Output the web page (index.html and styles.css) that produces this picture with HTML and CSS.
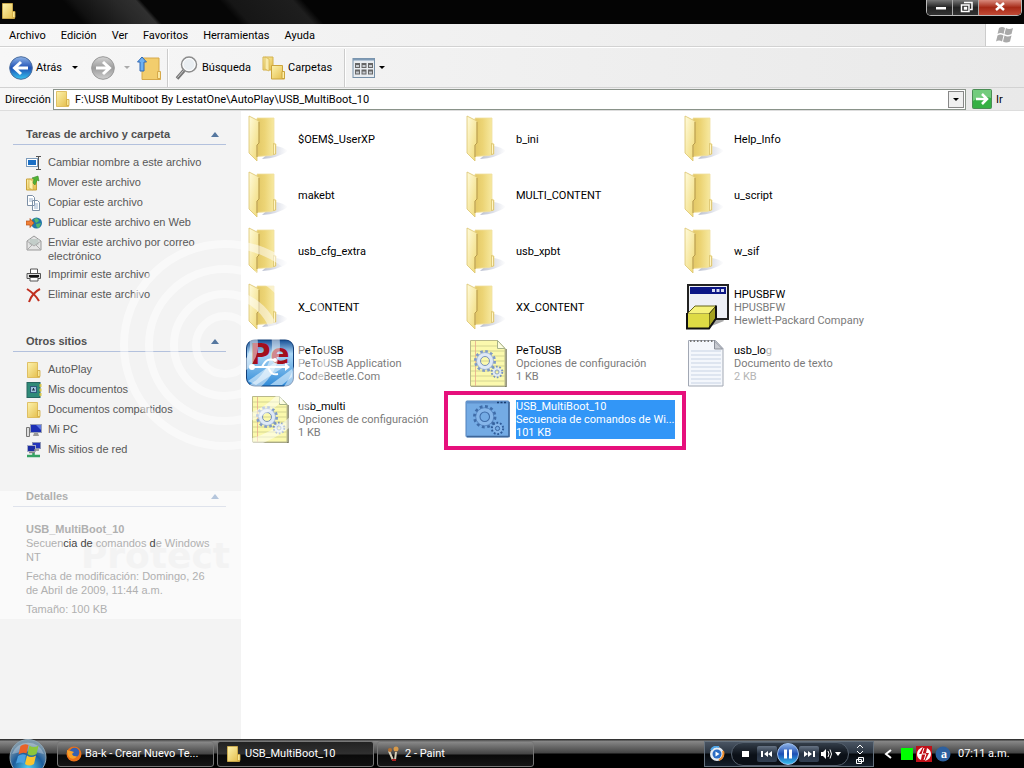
FILE: index.html
```html
<!DOCTYPE html>
<html lang="es">
<head>
    <meta charset="UTF-8">
    <meta name="viewport" content="width=device-width, initial-scale=1.0">
    <title>USB_MultiBoot_10</title>
    <link rel="stylesheet" href="styles.css">
</head>
<body>
    <!-- shared icons -->
    <svg class="sprite" aria-hidden="true">
        <defs>
            <linearGradient id="gFolder" x1="0" y1="0" x2="1" y2="1"><stop offset="0" stop-color="#fdf3ae"/><stop offset="1" stop-color="#e3bb46"/></linearGradient>
            <linearGradient id="gBack" x1="0" y1="0" x2="1" y2="0"><stop offset="0" stop-color="#e3c866"/><stop offset="0.4" stop-color="#ecd475"/><stop offset="1" stop-color="#f9eda9"/></linearGradient>
            <linearGradient id="gFlap" x1="0" y1="0" x2="1" y2="1"><stop offset="0" stop-color="#fffbdc"/><stop offset="1" stop-color="#f0d973"/></linearGradient>
            <linearGradient id="gShade" x1="0" y1="0" x2="1" y2="0"><stop offset="0" stop-color="#a9b0c6"/><stop offset="1" stop-color="#fff"/></linearGradient>
            <linearGradient id="gBlue" x1="0" y1="0" x2="0" y2="1"><stop offset="0" stop-color="#8fb4e8"/><stop offset="0.5" stop-color="#1d4fb4"/><stop offset="1" stop-color="#37c4f0"/></linearGradient>
            <linearGradient id="gGray" x1="0" y1="0" x2="0" y2="1"><stop offset="0" stop-color="#d4d4d4"/><stop offset="0.5" stop-color="#9c9c9c"/><stop offset="1" stop-color="#cfcfcf"/></linearGradient>
            <linearGradient id="gPe" x1="0" y1="0" x2="0" y2="1"><stop offset="0" stop-color="#164f96"/><stop offset="0.3" stop-color="#a9d6f5"/><stop offset="1" stop-color="#2f8ad8"/></linearGradient>
            <radialGradient id="gOrb" cx="0.5" cy="0.8" r="0.7"><stop offset="0" stop-color="#4fd0f5"/><stop offset="0.6" stop-color="#1d5c9a"/><stop offset="1" stop-color="#7d98ab"/></radialGradient>
        </defs>
        <symbol id="folder-big" viewBox="0 0 48 48">
            <path d="M16 44q16-1 26-8-5-4-12-5z" fill="url(#gShade)" opacity="0.8"/>
            <path d="M11 3h17v25l2 1v10l-5 1.500-14 1z" fill="url(#gBack)" stroke="#f0e0a0" stroke-width="0.800"/>
            <path d="M27.500 28.500l2 1v9.500l-2 .5z" fill="#fff6c8" stroke="#cfb04d" stroke-width="0.600"/>
            <path d="M3 1l10 5v22l-2 2v16l-8-8z" fill="url(#gFlap)" stroke="#dcc46e" stroke-width="0.800"/>
            <path d="M13 7v21l-2 2v12" fill="none" stroke="#b89c4c" stroke-width="1"/>
        </symbol>
        <symbol id="folder" viewBox="0 0 16 16">
            <path d="M1.500.5h10v8l2 1v6h-12z" fill="url(#gFolder)" stroke="#d9b44b" stroke-width="0.800"/>
            <path d="M11.500 8.500h2.500v6h-2.500z" fill="#f9e794" stroke="#cfa73e" stroke-width="0.800"/>
        </symbol>
        <symbol id="gears" viewBox="0 0 32 32">
            <circle cx="12" cy="12" r="9.500" fill="none" stroke="#7f9ac6" stroke-width="3" stroke-dasharray="2.600 2.370"/>
            <circle cx="12" cy="12" r="6.500" fill="none" stroke="#dfe9f6" stroke-width="4"/>
            <circle cx="12" cy="12" r="8.500" fill="none" stroke="#8aa5cf" stroke-width="0.700"/>
            <circle cx="12" cy="12" r="4.500" fill="none" stroke="#7892bd" stroke-width="1"/>
            <circle cx="24" cy="23" r="5" fill="none" stroke="#7892bd" stroke-width="2.500" stroke-dasharray="1.600 1.540"/>
            <circle cx="24" cy="23" r="3.200" fill="none" stroke="#dfe9f6" stroke-width="2.500"/>
            <circle cx="24" cy="23" r="2" fill="none" stroke="#7892bd" stroke-width="0.800"/>
        </symbol>
        <symbol id="gears-dark" viewBox="0 0 32 32">
            <circle cx="12" cy="12" r="9.500" fill="none" stroke="#3f6ca8" stroke-width="3" stroke-dasharray="2.600 2.370"/>
            <circle cx="12" cy="12" r="6.500" fill="none" stroke="#86b6ea" stroke-width="4"/>
            <circle cx="12" cy="12" r="8.500" fill="none" stroke="#4c7ab6" stroke-width="0.700"/>
            <circle cx="12" cy="12" r="4.500" fill="none" stroke="#3f6ca8" stroke-width="1"/>
            <circle cx="24" cy="23" r="5" fill="none" stroke="#2f5b98" stroke-width="2.500" stroke-dasharray="1.600 1.540"/>
            <circle cx="24" cy="23" r="3.200" fill="none" stroke="#86b6ea" stroke-width="2.500"/>
            <circle cx="24" cy="23" r="2" fill="none" stroke="#2f5b98" stroke-width="0.800"/>
        </symbol>
        <symbol id="config" viewBox="0 0 48 48">
            <path d="M7 48h35V10" fill="none" stroke="#77775c" stroke-width="1.500"/>
            <path d="M6.500 1.500h27l7.500 8v37.500h-34.500z" fill="#fbf9ad" stroke="#b9b98a"/>
            <path d="M7 7h26M7 12h34M7 17h34M7 22h34M7 27h34M7 32h34M7 37h34M7 42h34" stroke="#cfd08e" stroke-width="0.900"/>
            <path d="M11.500 2v45" stroke="#e8a98c" stroke-width="0.800"/>
            <path d="M33.500 1.500v8h7.500z" fill="#fdfde0" stroke="#a7b389"/>
            <use href="#gears" x="9" y="10" width="32" height="32"/>
        </symbol>
        <symbol id="batch" viewBox="0 0 48 48">
            <rect x="2" y="6" width="43" height="36" rx="1" fill="#74abe4" stroke="#4f80bb"/>
            <path d="M3 41.500h42V7" fill="none" stroke="#3d6699" stroke-width="1.500"/>
            <path d="M3 7.500h41" stroke="#5e90cb" stroke-width="2"/>
            <path d="M33 7.500h10" stroke="#173c70" stroke-width="1.500" stroke-dasharray="2 1.500"/>
            <use href="#gears-dark" x="8" y="9" width="34" height="34"/>
        </symbol>
        <symbol id="textfile" viewBox="0 0 48 48">
            <path d="M6.500 1.500h27l7.500 8v37.500h-34.500z" fill="#f4f7fc" stroke="#a2a8b4"/>
            <path d="M9 12h30M9 16h30M9 20h30M9 24h30M9 28h30M9 32h30M9 36h30M9 40h30M9 44h30" stroke="#c3cee2" stroke-width="0.900"/>
            <path d="M8 2h25" stroke="#777" stroke-width="2" stroke-dasharray="1.500 2"/>
            <path d="M32.500 2v8h8z" fill="#c8cbd2" stroke="#8a8f99"/>
        </symbol>
        <symbol id="hp" viewBox="0 0 48 48">
            <path d="M27 44l15-6-4-6z" fill="#aaa"/>
            <rect x="6" y="2" width="40" height="34" fill="#eef0f6" stroke="#222" stroke-width="2"/>
            <rect x="8" y="4" width="36" height="7" fill="#0c1786"/>
            <path d="M30 7.500h12" stroke="#d8dcf2" stroke-width="3" stroke-dasharray="3 1.500"/>
            <path d="M5 31l8-8h21l-7 8z" fill="#f5f27c" stroke="#66641a"/>
            <path d="M27 31l7-8v12l-7 10z" fill="#a5a321" stroke="#444310"/>
            <path d="M5 31h22v14h-22z" fill="#dedb45"/>
            <path d="M5 30v15.500h22l7-10v-13" fill="none" stroke="#111" stroke-width="2"/>
        </symbol>
        <symbol id="petousb" viewBox="0 0 48 48">
            <rect x="0.500" y="1" width="47" height="46" rx="8" fill="url(#gPe)" stroke="#123e77"/>
            <path d="M2 42L28 24h16L10 46zM24 46l22-16v8l-10 8z" fill="#e6f5ff" opacity="0.600"/>
            <text x="4" y="25" class="pe-text">Pe</text>
            <path d="M5 28h35M16 28c4-8 7-8 12-7M22 28c3 7 5 8 10 7" fill="none" stroke="#fff" stroke-width="2"/>
            <circle cx="6" cy="28" r="3" fill="#fff"/><circle cx="29" cy="21" r="2" fill="#fff"/><path d="M39 24l5 4-5 4z" fill="#fff"/>
        </symbol>
        <symbol id="flag" viewBox="0 0 20 20">
            <path d="M4 3q3-2 6 0l-1.500 6q-3-2-6 0z"/><path d="M11 3q3 2 7 0l-1.500 6q-4 2-7 0z"/>
            <path d="M2.500 10.500q3-2 6 0l-1.500 6q-3-2-6 0z"/><path d="M9.500 10.500q3 2 7 0l-1.500 6q-4 2-7 0z"/>
        </symbol>
        <symbol id="collapse" viewBox="0 0 8 5"><path d="M0 5l4-5 4 5z"/></symbol>
        <symbol id="down" viewBox="0 0 6 3"><path d="M0 0h6l-3 3z"/></symbol>
    </svg>

    <header class="title-bar">
        <svg class="icon16"><use href="#folder"/></svg>
        <div class="window-buttons">
            <button class="win-btn" aria-label="Minimizar"><svg viewBox="0 0 24 14"><path d="M8 6h10v2.500h-10z" fill="#fff"/></svg></button>
            <button class="win-btn" aria-label="Restaurar"><svg viewBox="0 0 24 14"><path d="M10 1.500h8v7h-2M7.500 4h7.500v6.500h-7.500z M10.500 6.500h2v1.500h-2z" fill="none" stroke="#fff" stroke-width="1.500"/></svg></button>
            <button class="win-btn win-close" aria-label="Cerrar"><svg viewBox="0 0 24 14"><path d="M8 2l8 7M16 2l-8 7" stroke="#fff" stroke-width="2.500"/></svg></button>
        </div>
    </header>

    <nav class="menu-bar">
        <button>Archivo</button>
        <button>Edición</button>
        <button>Ver</button>
        <button>Favoritos</button>
        <button>Herramientas</button>
        <button>Ayuda</button>
        <div class="brand"><svg class="brand-flag"><use href="#flag"/></svg></div>
    </nav>

    <div class="toolbar">
        <button class="tool back">
            <svg class="icon24" viewBox="0 0 24 24"><circle cx="12" cy="12" r="11.300" fill="url(#gBlue)" stroke="#4a6c9c"/><path d="M12 6l-6.500 6 6.500 6M6 12h13" fill="none" stroke="#fff" stroke-width="3"/></svg>
            Atrás
            <svg class="arrow"><use href="#down"/></svg>
        </button>
        <button class="tool forward" aria-label="Adelante">
            <svg class="icon24" viewBox="0 0 24 24"><circle cx="12" cy="12" r="11.300" fill="url(#gGray)" stroke="#999"/><path d="M12 6l6.500 6-6.500 6M18 12h-13" fill="none" stroke="#fff" stroke-width="3"/></svg>
            <svg class="arrow"><use href="#down"/></svg>
        </button>
        <button class="tool" aria-label="Arriba">
            <svg class="icon24" viewBox="0 0 24 24"><path d="M5 2h17v14l1.500 1v6.500h-18.500z" fill="#f2cd6d" stroke="#d6a94a"/><path d="M20.500 15.500h3v7h-3z" fill="#fbe9a4" stroke="#d6a94a"/><path d="M5 1l4.500 5h-2.500v9h-4v-9h-2.500z" fill="#6db1f2" stroke="#3168b5"/></svg>
        </button>
        <span class="divider"></span>
        <button class="tool search">
            <svg class="icon24" viewBox="0 0 24 24"><circle cx="14" cy="8.500" r="7.500" fill="#e9eef2" stroke="#8c8c8c" stroke-width="1.500"/><circle cx="14" cy="8.500" r="6" fill="none" stroke="#fff"/><path d="M9 14.500l-7 8" stroke="#777" stroke-width="3.500"/><path d="M8.500 14.500l-6 7" stroke="#ccc"/></svg>
            Búsqueda
        </button>
        <button class="tool folders">
            <svg class="icon24" viewBox="0 0 24 24"><path d="M2 1h10v13h-10z" fill="url(#gFolder)" stroke="#d4b24e"/><path d="M4 1l4 2v12l-4-2z" fill="#f9ebaa" stroke="#d4b24e" stroke-width="0.700"/><path d="M10.500 9.500h11v6l2 1v6.500h-13z" fill="url(#gFolder)" stroke="#cba43d"/><path d="M21 15.500h2.500v7h-2.500z" fill="#fff0a5" stroke="#cba43d"/></svg>
            Carpetas
        </button>
        <span class="divider"></span>
        <button class="tool views" aria-label="Vistas">
            <svg class="icon24" viewBox="0 0 24 24"><rect x="1" y="2.500" width="21.500" height="19" fill="#e9edf1" stroke="#7690a8"/><path d="M1 3.500h21.500" stroke="#7f9bb6" stroke-width="2"/><path d="M3 9.500h5M9.500 9.500h5M16 9.500h5M3 16h5M9.500 16h5M16 16h5" stroke="#666" stroke-width="5"/><path d="M4 10h3M10.500 10h3M17 10h3M4 16.500h3M10.500 16.500h3M17 16.500h3" stroke="#c5cad0" stroke-width="2"/></svg>
            <svg class="arrow"><use href="#down"/></svg>
        </button>
    </div>

    <form class="address-bar" onsubmit="return false">
        <label for="address">Dirección</label>
        <div class="address-box">
            <svg class="icon16"><use href="#folder"/></svg>
            <input type="text" id="address" value="F:\USB Multiboot By LestatOne\AutoPlay\USB_MultiBoot_10">
            <button type="button" class="drop" aria-label="Desplegar"><svg class="arrow"><use href="#down"/></svg></button>
        </div>
        <button class="go">
            <svg viewBox="0 0 20 20"><rect x="0.500" y="0.500" width="19" height="19" rx="1" fill="#35b044" stroke="#4b8d55"/><path d="M1 1h18v8q-9-3-18 3z" fill="#8fd896" opacity="0.700"/><path d="M10 5l5 5-5 5M4 10h10" fill="none" stroke="#fff" stroke-width="2.500"/></svg>
            Ir
        </button>
    </form>

    <div class="explorer">
        <aside class="side-panel">
            <section class="task-group">
                <h2>Tareas de archivo y carpeta <svg class="collapse"><use href="#collapse"/></svg></h2>
                <ul>
                    <li><a href="#"><svg class="icon16" viewBox="0 0 16 16"><rect x="0.500" y="3.500" width="11" height="8" fill="#fff" stroke="#7d9cbc"/><rect x="2" y="5" width="8" height="5" fill="#1b6fc4"/><path d="M10 1.500h5M12.500 1.500v13M10 14.500h5" stroke="#555" fill="none"/></svg><span>Cambiar nombre a este archivo</span></a></li>
                    <li><a href="#"><svg class="icon16" viewBox="0 0 16 16"><path d="M.5 4h10v11h-10z" fill="url(#gFolder)" stroke="#c9a23b"/><path d="M3 4l4 2v9l-4-2z" fill="#fff3ad" stroke="#c9a23b" stroke-width="0.600"/><path d="M7 8l1-4-2-1 6-2 1 5-2-1-2 5z" fill="#4fb335" stroke="#3a8a26" stroke-width="0.600"/></svg><span>Mover este archivo</span></a></li>
                    <li><a href="#"><svg class="icon16" viewBox="0 0 16 16"><path d="M1.500.5h5l2 2v8h-7zM6.500 5.500h5l2 2v8h-7z" fill="#fff" stroke="#7c8fa5"/><path d="M3 4h4M3 6h3M8 9h4M8 11h4M8 13h4" stroke="#9ab0ca"/></svg><span>Copiar este archivo</span></a></li>
                    <li><a href="#"><svg class="icon16" viewBox="0 0 16 16"><circle cx="10.500" cy="8" r="5.500" fill="#2176a8"/><path d="M8 4q4-2 5 2l-3 2zM10 9l5-1-2 5q-3 0-3-4z" fill="#55b86b"/><path d="M0 6h4V3.500l4 4.500-4 4.500V10H0z" fill="#f08035" stroke="#b6501a" stroke-width="0.700"/></svg><span>Publicar este archivo en Web</span></a></li>
                    <li><a href="#"><svg class="icon16" viewBox="0 0 16 16"><path d="M1 6l7-5 7 5v9h-14z" fill="#e4e4e4" stroke="#999"/><path d="M3.500 4h9v6h-9z" fill="#c3cdc9"/><path d="M1 6l7 5 7-5M1 15l5-5M15 15l-5-5" fill="none" stroke="#aaa"/></svg><span>Enviar este archivo por correo electrónico</span></a></li>
                    <li><a href="#"><svg class="icon16" viewBox="0 0 16 16"><path d="M4.500 6v-4h7v4" fill="#fff" stroke="#555"/><path d="M1 6.500h13.500v5h-13.500z" fill="#ddd" stroke="#555"/><path d="M3 9h10" stroke="#111" stroke-width="2"/><path d="M4 10.500h8v3.500h-8z" fill="#fff" stroke="#555"/></svg><span>Imprimir este archivo</span></a></li>
                    <li><a href="#"><svg class="icon16" viewBox="0 0 16 16"><path d="M1 2q8 5 12 12M14 2q-8 4-11 13" fill="none" stroke="#c02f1f" stroke-width="2"/></svg><span>Eliminar este archivo</span></a></li>
                </ul>
            </section>
            <section class="task-group">
                <h2>Otros sitios <svg class="collapse"><use href="#collapse"/></svg></h2>
                <ul>
                    <li><a href="#"><svg class="icon16"><use href="#folder"/></svg><span>AutoPlay</span></a></li>
                    <li><a href="#"><svg class="icon16" viewBox="0 0 16 16"><rect x="1" y="0.500" width="13" height="15" fill="#2f8a78" stroke="#28665f"/><rect x="4.500" y="4.500" width="6" height="6" fill="#9dc1dc" stroke="#30597c"/><path d="M6 8h3M7.500 6v2" stroke="#234"/><path d="M14.500 2v12" stroke="#d7c54b" stroke-width="2" stroke-dasharray="3 1.500"/></svg><span>Mis documentos</span></a></li>
                    <li><a href="#"><svg class="icon16"><use href="#folder"/></svg><span>Documentos compartidos</span></a></li>
                    <li><a href="#"><svg class="icon16" viewBox="0 0 16 16"><path d="M0.500 5.500h3v9h-3z" fill="#ddd" stroke="#777"/><rect x="4.500" y="2.500" width="11" height="8" fill="#1c2fb4" stroke="#9aa0b4"/><path d="M10 3l5 0v5z" fill="#5c77e4"/><path d="M8 11h4l1 3h-6z" fill="#999"/></svg><span>Mi PC</span></a></li>
                    <li><a href="#"><svg class="icon16" viewBox="0 0 16 16"><rect x="6.500" y="0.500" width="8" height="6" fill="#2436bb" stroke="#8b93b5"/><rect x="1.500" y="3.500" width="8" height="6" fill="#1b2ba2" stroke="#a7adc6"/><path d="M3 10.500h6M8 8h5" stroke="#888" stroke-width="1.500"/><path d="M7.500 11v3M1 14h13" stroke="#35a163" stroke-width="2.500"/></svg><span>Mis sitios de red</span></a></li>
                </ul>
            </section>
            <section class="task-group details">
                <h2>Detalles <svg class="collapse"><use href="#collapse"/></svg></h2>
                <div class="details-body">
                    <span class="protect">Protect</span>
                    <strong>USB_MultiBoot_10</strong>
                    <p>Secuen<b>cia de</b> comandos <b>d</b>e Windows NT</p>
                    <p>Fecha de modificación: Domingo, 26 de Abril de 2009, 11:44 a.m.</p>
                    <p>Tamaño: 100 KB</p>
                </div>
            </section>
        </aside>

        <main class="files">
            <a href="#" class="file"><svg><use href="#folder-big"/></svg><span class="label">$OEM$_UserXP</span></a>
            <a href="#" class="file"><svg><use href="#folder-big"/></svg><span class="label">b_ini</span></a>
            <a href="#" class="file"><svg><use href="#folder-big"/></svg><span class="label">Help_Info</span></a>
            <a href="#" class="file"><svg><use href="#folder-big"/></svg><span class="label">makebt</span></a>
            <a href="#" class="file"><svg><use href="#folder-big"/></svg><span class="label">MULTI_CONTENT</span></a>
            <a href="#" class="file"><svg><use href="#folder-big"/></svg><span class="label">u_script</span></a>
            <a href="#" class="file"><svg><use href="#folder-big"/></svg><span class="label">usb_cfg_extra</span></a>
            <a href="#" class="file"><svg><use href="#folder-big"/></svg><span class="label">usb_xpbt</span></a>
            <a href="#" class="file"><svg><use href="#folder-big"/></svg><span class="label">w_sif</span></a>
            <a href="#" class="file"><svg><use href="#folder-big"/></svg><span class="label">X_CONTENT</span></a>
            <a href="#" class="file"><svg><use href="#folder-big"/></svg><span class="label">XX_CONTENT</span></a>
            <a href="#" class="file"><svg><use href="#hp"/></svg><span class="label">HPUSBFW<small>HPUSBFW</small><small>Hewlett-Packard Company</small></span></a>
            <a href="#" class="file"><svg><use href="#petousb"/></svg><span class="label">PeToUSB<small>PeToUSB Application</small><small>CodeBeetle.Com</small></span></a>
            <a href="#" class="file"><svg><use href="#config"/></svg><span class="label">PeToUSB<small>Opciones de configuración</small><small>1 KB</small></span></a>
            <a href="#" class="file"><svg><use href="#textfile"/></svg><span class="label">usb_lo<i>g</i><small>Documento de texto</small><small><i>2 KB</i></small></span></a>
            <a href="#" class="file"><svg><use href="#config"/></svg><span class="label">usb_multi<small>Opciones de configuración</small><small>1 KB</small></span></a>
            <a href="#" class="file selected"><svg><use href="#batch"/></svg><span class="label">USB_MultiBoot_10<small>Secuencia de comandos de Wi...</small><small>101 KB</small></span></a>
        </main>

        <svg class="rings" viewBox="0 0 220 220" aria-hidden="true">
            <circle cx="110" cy="110" r="101"/>
            <circle cx="110" cy="110" r="76"/>
            <circle cx="110" cy="110" r="51"/>
            <circle cx="110" cy="110" r="29"/>
        </svg>
    </div>

    <footer class="taskbar">
        <button class="start" aria-label="Inicio">
            <svg viewBox="0 0 38 29"><circle cx="19" cy="18.500" r="18" fill="url(#gOrb)" stroke="#8fa6b5"/><path d="M3 15a17 17 0 0 1 32 0q-16-5-32 0z" fill="#fff" opacity="0.300"/><path d="M11.500 7q4-3 8-1l-2 8.500q-4-2-8 1z" fill="#e8622a"/><path d="M20.500 6.500q4 3 9 0l-2 8.500q-5 3-9 0z" fill="#8cc63c"/><path d="M9 17q4-3 8-1l-2 8.500q-4-2-8 0z" fill="#4aa0e0"/><path d="M18 16.500q4 3 9 0l-2 8.500q-5 3-9 0z" fill="#fbc42d"/></svg>
        </button>
        <button class="task">
            <svg class="icon16" viewBox="0 0 16 16"><circle cx="8" cy="8" r="7.500" fill="#e8701a"/><circle cx="8.500" cy="6.500" r="4.800" fill="#3560b0"/><path d="M1 4q2 1 4 1l3 1-2 2q1 3 5 2-2 4-7 2-3-3-3-8z" fill="#f6a12a"/></svg>
            <span>Ba-k - Crear Nuevo Te...</span>
        </button>
        <button class="task active">
            <svg class="icon16"><use href="#folder"/></svg>
            <span>USB_MultiBoot_10</span>
        </button>
        <button class="task">
            <svg class="icon16" viewBox="0 0 16 16"><path d="M3 5l4 9M9 14l1-8" stroke="#d8d0b8" stroke-width="2"/><circle cx="4" cy="4" r="2" fill="#b5702e"/><circle cx="10" cy="3" r="2.500" fill="#d89a4a"/><path d="M6 14h4" stroke="#a22" stroke-width="2"/></svg>
            <span>2 - Paint</span>
        </button>
        <div class="player">
            <svg class="icon16" viewBox="0 0 16 16"><circle cx="8" cy="8" r="7" fill="#e7ecf2"/><path d="M2 4a7 7 0 0 1 8-3" stroke="#4fa5e8" stroke-width="2" fill="none"/><path d="M14 5a7 7 0 0 1-4 9" stroke="#e98a2c" stroke-width="2" fill="none"/><circle cx="8" cy="8" r="4.500" fill="#2b6cc4"/><path d="M6.500 5.500l4 2.500-4 2.500z" fill="#fff"/></svg>
            <div class="player-controls">
                <button class="stop" aria-label="Detener"><svg viewBox="0 0 20 16"><path d="M5 5h7v6h-7z"/></svg></button>
                <button class="lit" aria-label="Anterior"><svg viewBox="0 0 20 16"><path d="M4 5h2v6h-2zM11 5v6l-4-3zM15 5v6l-4-3z"/></svg></button>
                <button class="pause" aria-label="Pausa"><svg viewBox="0 0 22 22"><circle cx="11" cy="11" r="10.500" fill="url(#gBlue)" stroke="#9fc0ee"/><path d="M7 6.500h3v9h-3zM12 6.500h3v9h-3z"/></svg></button>
                <button class="lit" aria-label="Siguiente"><svg viewBox="0 0 20 16"><path d="M14 5h2v6h-2zM9 5v6l4-3zM5 5v6l4-3z"/></svg></button>
                <button class="volume" aria-label="Volumen"><svg viewBox="0 0 24 16"><path d="M2 6h2l3-3v10l-3-3h-2zM16 6h6l-3 4z"/><path d="M9 5q2 3 0 6M11 3.500q3 4.500 0 9" fill="none" stroke="#fff"/></svg></button>
            </div>
            <svg class="player-side" viewBox="0 0 10 24"><path d="M2 6l3-3 3 3M2 9l3 3 3-3" fill="none" stroke="#fff"/><path d="M3.500 15.500h5v4h-5zM1.500 17.500h5v4h-5z" fill="#1c2733" stroke="#fff"/></svg>
        </div>
        <div class="tray">
            <svg class="chevron" viewBox="0 0 8 10"><path d="M7 1l-5 4 5 4" fill="none" stroke="#fff" stroke-width="2"/></svg>
            <span class="green"></span>
            <svg class="icon16" viewBox="0 0 16 16"><rect width="16" height="16" fill="#c01018"/><path d="M7 1l-4 7h3l-1 6q-4-2-4-6 0-5 6-7zM9 15l4-8h-3l1-5q4 2 4 6 0 5-6 7z" fill="#fff"/><path d="M8 2l-2 6h2M8 14l2-6h-2" fill="none" stroke="#fff"/></svg>
            <svg class="icon16" viewBox="0 0 16 16"><circle cx="8" cy="8" r="7.500" fill="#2d609f"/><text x="6" y="12" class="a-text">a</text></svg>
            <time>07:11 a.m.</time>
        </div>
    </footer>
</body>
</html>
```
FILE: styles.css
```css
* {
    box-sizing: border-box;
}
body {
    margin: 0;
    height: 100vh;
    display: flex;
    flex-direction: column;
    overflow: hidden;
    background-color: #fff;
    color: #000;
    font-family: Roboto, Tahoma, sans-serif;
    font-size: 11px;
    line-height: 13px;
}
button, input {
    font: inherit;
    color: inherit;
    background: none;
    border: none;
    padding: 0;
    margin: 0;
}
a {
    color: inherit;
    text-decoration: none;
}
svg {
    display: block;
    flex: none;
}
.sprite {
    position: absolute;
    width: 0;
    height: 0;
}
.icon16 {
    width: 16px;
    height: 16px;
}
.icon24 {
    width: 24px;
    height: 24px;
}
.arrow {
    width: 6px;
    height: 3px;
}

/* title bar */
.title-bar {
    flex: none;
    height: 24px;
    display: flex;
    justify-content: space-between;
    padding: 3px 2px 0 1px;
    background: linear-gradient(48deg, #060606 8%, #111 9%, #282828 13%, #303030 15%, #060606 15.500%, #060606 23%, #161616 24%, #1e1e1e 30%, #040404 31%);
}
.window-buttons {
    display: flex;
    height: 16px;
    margin-top: -3px;
    border: 1px solid #bbb;
    border-top: none;
    border-radius: 0 0 5px 5px;
    overflow: hidden;
}
.win-btn {
    width: 26px;
    background: linear-gradient(#777, #222 50%, #333);
    border-right: 1px solid #aaa;
}
.win-btn svg {
    width: 24px;
    height: 14px;
    margin: 0 auto;
}
.win-close {
    width: 42px;
    border-right: none;
    background: linear-gradient(#d98a7c, #a62a17 50%, #c24a36);
}

/* menu */
.menu-bar {
    flex: none;
    display: flex;
    height: 23px;
    padding-left: 2px;
    background: linear-gradient(to right, #f7f7f7, #e9e9e9);
    border-bottom: 1px solid #d2d2d2;
}
.menu-bar button {
    padding: 0 8px 0 7px;
}
.brand {
    margin-left: auto;
    width: 39px;
    background-color: #fff;
    border-left: 1px solid #ccc;
    display: flex;
    align-items: center;
    justify-content: center;
}
.brand-flag {
    width: 20px;
    height: 20px;
    fill: #a9a9a9;
}

/* toolbar */
.toolbar {
    flex: none;
    display: flex;
    align-items: center;
    height: 41px;
    padding-left: 9px;
    background: linear-gradient(to right, #f7f7f7, #e9e9e9);
    border-top: 1px solid #fff;
    border-bottom: 1px solid #d2d2d2;
}
.tool {
    display: flex;
    align-items: center;
    gap: 3px;
}
.back {
    width: 82px;
}
.back .arrow {
    margin-left: 7px;
}
.forward {
    width: 46px;
    gap: 9px;
}
.forward .arrow {
    fill: #aaa;
}
.divider {
    width: 2px;
    height: 38px;
    margin: 0 6px;
    border-left: 1px solid #ccc;
    border-right: 1px solid #fff;
}
.search {
    width: 86px;
}
.folders {
    width: 77px;
}

/* address */
.address-bar {
    flex: none;
    display: flex;
    align-items: center;
    height: 23px;
    padding-left: 5px;
    background: linear-gradient(to right, #f7f7f7, #e9e9e9);
    border-bottom: 1px solid #ddd;
}
.address-bar label {
    width: 48px;
}
.address-box {
    flex: 1;
    display: flex;
    align-items: center;
    height: 21px;
    padding: 0 1px 0 1px;
    background-color: #fff;
    border: 1px solid #8a938a;
}
.address-box input {
    flex: 1;
    padding-left: 4px;
    outline: none;
}
.drop {
    width: 16px;
    height: 17px;
    display: flex;
    align-items: center;
    justify-content: center;
    background-color: #f0f0f0;
    border: 1px solid #888;
}
.go {
    display: flex;
    align-items: center;
    gap: 4px;
    width: 58px;
    padding-left: 6px;
}
.go svg {
    width: 20px;
    height: 20px;
}

/* explorer */
.explorer {
    flex: 1;
    display: flex;
    min-height: 0;
    position: relative;
}
.side-panel {
    flex: none;
    width: 241px;
    padding-top: 8px;
    background-color: #f3f3f3;
    color: #585858;
    font-family: "Liberation Sans", Arial, sans-serif;
    line-height: 14px;
}
.task-group {
    padding: 5px 15px 0 13px;
    margin-bottom: 21px;
}
.task-group h2 {
    display: flex;
    align-items: center;
    justify-content: space-between;
    height: 21px;
    margin: 0 0 8px;
    padding: 0 7px 0 13px;
    border-bottom: 1px solid #b3c1dd;
    font-size: 11px;
    color: #505050;
}
.collapse {
    width: 8px;
    height: 5px;
    fill: #55779f;
}
.task-group ul {
    list-style: none;
    margin: 0;
    padding: 0 0 0 13px;
}
.task-group li {
    padding: 2px 0;
}
.task-group li a {
    display: flex;
    align-items: flex-start;
    gap: 6px;
}
.task-group li span {
    max-width: 160px;
}
.details {
    height: 128px;
    margin-top: 31px;
    padding-top: 0;
    background-color: #fafafa;
    color: #b0b0b0;
}
.details h2 {
    height: 16px;
    margin-bottom: 15px;
    padding-bottom: 5px;
    color: #b0b0b0;
    border-color: #dfe3ec;
}
.details .collapse {
    fill: #b5c6dc;
}
.details-body {
    position: relative;
    padding: 0 10px 0 13px;
}
.details-body strong,
.details-body p {
    position: relative;
}
.details-body p {
    margin: 0 0 5px;
}
.details-body b {
    font-weight: normal;
    color: #444;
}
/* faint lettering behind the details */
.protect {
    position: absolute;
    right: -4px;
    top: 14px;
    font: bold 36px/40px "DejaVu Sans", sans-serif;
    color: #f3f3f3;
}
.rings {
    position: absolute;
    left: 115px;
    top: 124px;
    width: 220px;
    height: 220px;
    fill: none;
    stroke: #fff;
    stroke-width: 8px;
    opacity: 0.5;
    pointer-events: none;
}

/* files */
.files {
    flex: 1;
    display: grid;
    grid-template-columns: repeat(auto-fill, 218px);
    grid-auto-rows: 56px;
    align-content: start;
    padding-left: 5px;
}
.file {
    display: flex;
    align-items: center;
    gap: 4px;
    position: relative;
}
.file svg {
    width: 48px;
    height: 48px;
}
.label {
    max-width: 159px;
}
.label small {
    display: block;
    font-size: 11px;
    color: #7b7b7b;
    white-space: nowrap;
}
.label i {
    font-style: normal;
    color: #b5b5b5;
}
.selected .label {
    width: 159px;
}
.selected .label,
.selected small {
    background-color: #3296f7;
    color: #fff;
}
.selected::after {
    content: "";
    position: absolute;
    inset: 0 -4px -3px -20px;
    border: 4px solid #e6107c;
}
.pe-text {
    font: bold 28px "DejaVu Sans", sans-serif;
    fill: #a3101d;
}

/* taskbar */
.taskbar {
    flex: none;
    display: flex;
    align-items: center;
    height: 29px;
    padding-left: 9px;
    color: #fff;
    background: linear-gradient(#333 1px, #888 2px, #444 14px, #000 15px);
}
.start {
    width: 48px;
    height: 29px;
}
.start svg {
    width: 38px;
    height: 29px;
}
.task {
    display: flex;
    align-items: center;
    gap: 3px;
    width: 157px;
    height: 26px;
    margin-right: 3px;
    padding: 0 8px;
    border: 1px solid #777;
    border-radius: 3px;
    background: linear-gradient(#888, #444 12px, #0a0a0a 13px, #161616);
}
.task.active {
    background: linear-gradient(#222, #303030 12px, #0a0a0a 13px, #111);
}
.player {
    display: flex;
    align-items: center;
    gap: 6px;
    width: 170px;
    height: 26px;
    margin-left: auto;
    padding: 0 4px;
    border: 1px solid #66727e;
    background: linear-gradient(#4a5563, #2a3440 11px, #05080c 12px, #16202c);
}
.player-controls {
    display: flex;
    align-items: center;
    height: 24px;
    padding: 0 5px;
    border: 1px solid #55606d;
    border-radius: 12px;
    background: linear-gradient(#343e4a, #0b1017 12px);
}
.player-controls svg {
    height: 16px;
    width: 20px;
    fill: #fff;
}
.player-controls .pause svg {
    width: 22px;
    height: 22px;
}
.player-controls .volume svg {
    width: 24px;
}
.lit {
    border-radius: 2px;
    background: linear-gradient(#667384, #253040 50%, #334052);
}
.player-side {
    width: 10px;
    height: 24px;
}
.tray {
    display: flex;
    align-items: center;
    gap: 3px;
    width: 150px;
    padding-left: 10px;
}
.chevron {
    width: 8px;
    height: 10px;
    margin-right: 6px;
}
.green {
    width: 12px;
    height: 12px;
    background-color: #0f0;
}
.a-text {
    font: bold 12px "Liberation Serif", serif;
    fill: #fff;
}
.tray time {
    margin-left: 4px;
}
```
